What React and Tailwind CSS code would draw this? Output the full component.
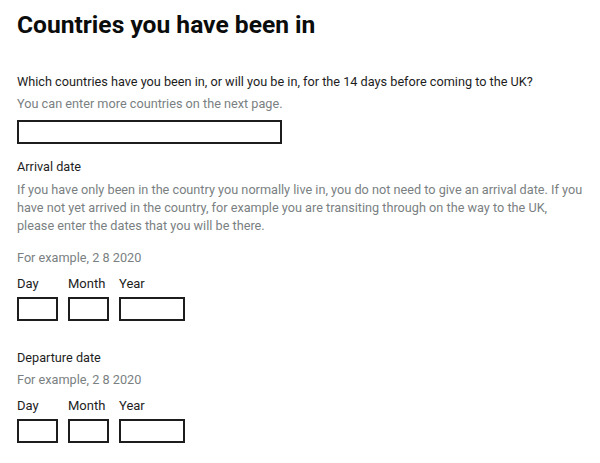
export default function App() {
  const font = { fontFamily: 'Roboto, "Liberation Sans", Arial, sans-serif' };

  const DateFields = ({ className }) => (
    <div className={`flex gap-[10px] ${className}`}>
      {[
        { label: 'Day', w: 'w-[41px]' },
        { label: 'Month', w: 'w-[41px]' },
        { label: 'Year', w: 'w-[66px]' },
      ].map(({ label, w }) => (
        <div key={label} className="flex flex-col">
          <label className="text-[13px] leading-[18px] text-[#1d1d1d] whitespace-nowrap">{label}</label>
          <input type="text" className={`${w} h-[24px] mt-[4px] border-2 border-[#1d1d1d] outline-none bg-white`} />
        </div>
      ))}
    </div>
  );

  return (
    <div className="min-h-[463px] w-[600px] bg-white pl-[17px]" style={font}>
      {/* Heading */}
      <h1 className="pt-[10px] text-[24.6px] leading-[30px] font-bold text-[#0b0c0c]">Countries you have been in</h1>

      {/* Countries */}
      <p className="mt-[33px] text-[12.7px] leading-[18px] text-[#1d1d1d] whitespace-nowrap">
        Which countries have you been in, or will you be in, for the 14 days before coming to the UK?
      </p>
      <p className="mt-[4px] text-[12.7px] leading-[18px] text-[#7a7f82]">You can enter more countries on the next page.</p>
      <input type="text" className="mt-[7px] w-[265px] h-[24px] border-2 border-[#1d1d1d] outline-none bg-white block" />

      {/* Arrival */}
      <p className="mt-[14px] text-[12.7px] leading-[18px] text-[#1d1d1d]">Arrival date</p>
      <p className="mt-[5px] text-[12.7px] leading-[18px] text-[#7a7f82] whitespace-nowrap">
        If you have only been in the country you normally live in, you do not need to give an arrival date. If you
        <br />
        have not yet arrived in the country, for example you are transiting through on the way to the UK,
        <br />
        please enter the dates that you will be there.
      </p>
      <p className="mt-[14px] text-[12.7px] leading-[18px] text-[#7a7f82]">For example, 2 8 2020</p>
      <DateFields className="mt-[8px]" />

      {/* Departure */}
      <p className="mt-[28px] text-[12.7px] leading-[18px] text-[#1d1d1d]">Departure date</p>
      <p className="mt-[4px] text-[12.7px] leading-[18px] text-[#7a7f82]">For example, 2 8 2020</p>
      <DateFields className="mt-[8px]" />
    </div>
  );
}
